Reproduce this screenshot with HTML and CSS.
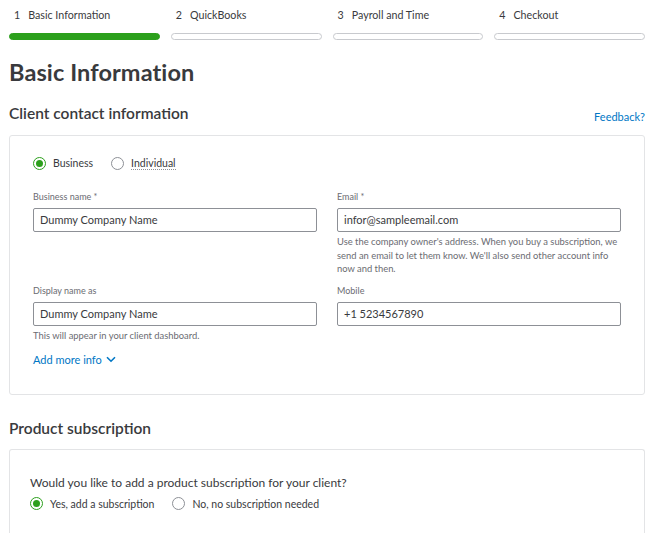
FILE: index.html
```html
<!DOCTYPE html>
<html>
<head>
<meta charset="utf-8">
<link rel="stylesheet" href="styles.css">
</head>
<body>
<div class="page">
  <div class="stepper">
    <div class="step active"><div class="step-label"><span class="num">1</span>Basic Information</div><div class="bar"></div></div>
    <div class="step"><div class="step-label"><span class="num">2</span>QuickBooks</div><div class="bar"></div></div>
    <div class="step"><div class="step-label"><span class="num">3</span>Payroll and Time</div><div class="bar"></div></div>
    <div class="step"><div class="step-label"><span class="num">4</span>Checkout</div><div class="bar"></div></div>
  </div>

  <h1 class="title">Basic Information</h1>

  <div class="section-head">
    <h2 class="section-title">Client contact information</h2>
    <a class="link feedback">Feedback?</a>
  </div>

  <div class="card contact">
    <div class="radio-row">
      <label class="radio checked"><span class="dot"></span>Business</label>
      <label class="radio"><span class="dot"></span><span class="dotted">Individual</span></label>
    </div>
    <div class="fields">
      <div class="field">
        <div class="label">Business name *</div>
        <div class="input">Dummy Company Name</div>
      </div>
      <div class="field">
        <div class="label">Email *</div>
        <div class="input">infor@sampleemail.com</div>
        <div class="help">Use the company owner's address. When you buy a subscription, we send an email to let them know. We'll also send other account info now and then.</div>
      </div>
      <div class="field">
        <div class="label">Display name as</div>
        <div class="input">Dummy Company Name</div>
        <div class="help">This will appear in your client dashboard.</div>
      </div>
      <div class="field">
        <div class="label">Mobile</div>
        <div class="input">+1 5234567890</div>
      </div>
    </div>
    <a class="link more">Add more info <svg width="10" height="7" viewBox="0 0 10 7"><path d="M1 1.2 L5 5.2 L9 1.2" fill="none" stroke="#0077c5" stroke-width="1.6"/></svg></a>
  </div>

  <h2 class="section-title sub">Product subscription</h2>
  <div class="card subscr">
    <div class="question">Would you like to add a product subscription for your client?</div>
    <div class="radio-row tight">
      <label class="radio checked"><span class="dot"></span>Yes, add a subscription</label>
      <label class="radio"><span class="dot"></span>No, no subscription needed</label>
    </div>
  </div>
</div>
</body>
</html>
```
FILE: styles.css
```css
* { box-sizing: border-box; }
html, body { margin: 0; padding: 0; background: #fff; }
body {
  font-family: Lato, "Open Sans", "Liberation Sans", sans-serif;
  color: #393a3d;
  overflow: hidden;
  height: 533px;
}
.page { padding: 0 26px 0 9px; width: 671px; }

.stepper {
  display: grid;
  grid-template-columns: repeat(4, 1fr);
  gap: 11px;
  padding-top: 7px;
  width: 636px;
}
.step-label {
  font-size: 10.7px;
  color: #393a3d;
  height: 16px;
  line-height: 16px;
  padding-left: 5px;
}
.num { margin-right: 8px; }
.bar {
  margin-top: 10px;
  height: 7px;
  border: 1.5px solid #c8cace;
  border-radius: 4px;
  background: #fff;
}
.step.active .bar { background: #2ca01c; border-color: #2ca01c; }

.title {
  margin: 18px 0 0;
  font-size: 23.5px;
  font-weight: 700;
  line-height: 28px;
  letter-spacing: 0.1px;
}

.section-head {
  display: flex;
  justify-content: space-between;
  align-items: flex-end;
  width: 636px;
  margin-top: 16px;
}
.section-title {
  margin: 0;
  font-size: 15.5px;
  font-weight: 600;
  line-height: 22px;
}
.link { color: #0077c5; font-size: 11px; cursor: pointer; }
.feedback { line-height: 14px; }

.card {
  border: 1.5px solid #e3e4e6;
  border-radius: 3px;
  width: 636px;
}
.contact {
  margin-top: 11px;
  padding: 20px 24px 27px 23px;
}
.radio-row { display: flex; gap: 18px; font-size: 10.5px; }
.radio { display: flex; align-items: center; gap: 7px; line-height: 14px; color: #393a3d; }
.dot {
  width: 13px; height: 13px;
  border: 1.2px solid #8d9096;
  border-radius: 50%;
  display: inline-block;
  position: relative;
}
.radio.checked .dot { border-color: #2ca01c; }
.radio.checked .dot::after {
  content: "";
  position: absolute;
  left: 2px; top: 2px;
  width: 7px; height: 7px;
  border-radius: 50%;
  background: #2ca01c;
}
.dotted { border-bottom: 1px dotted #8d9096; line-height: 12px; }

.fields {
  display: grid;
  grid-template-columns: 284px 284px;
  column-gap: 20px;
  margin-top: 21px;
}
.label {
  font-size: 9px;
  color: #6b6c72;
  line-height: 12px;
  height: 12px;
}
.input {
  margin-top: 5px;
  height: 24px;
  border: 1px solid #8d9096;
  border-radius: 2px;
  padding: 0 6px;
  font-size: 11px;
  line-height: 22px;
  color: #393a3d;
}
.help {
  margin-top: 3px;
  font-size: 9.4px;
  line-height: 13.5px;
  color: #6b6c72;
}
.fields .field:nth-child(2) { min-height: 94px; }

.more {
  display: inline-flex;
  align-items: center;
  gap: 4px;
  margin-top: 10px;
}

.sub { margin-top: 22px; }
.subscr {
  margin-top: 10px;
  height: 100px;
  padding: 25px 20px;
  border-bottom: none;
}
.question { font-size: 12px; line-height: 16px; color: #393a3d; }
.tight { margin-top: 6px; gap: 18px; font-size: 10.5px; }
```
